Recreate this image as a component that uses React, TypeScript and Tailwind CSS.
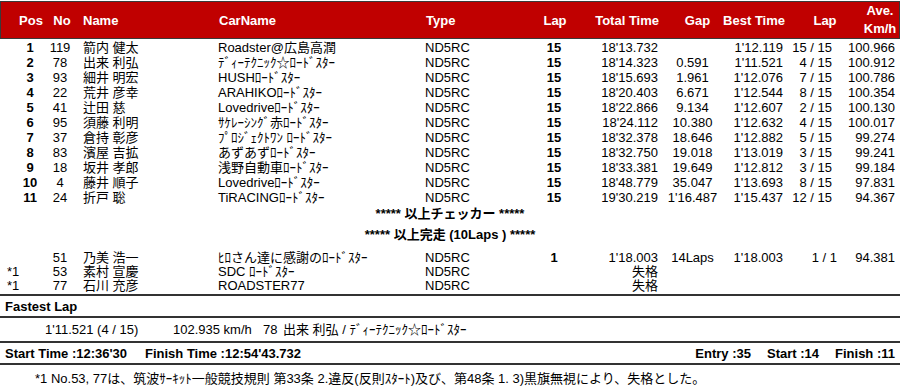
import React from "react";

const COLS =
  "grid grid-cols-[46px_28px_144px_207px_105px_48px_87px_55px_70px_50px_60px]";

type Row = {
  pos: string;
  no: string;
  name: string;
  car: string;
  lap: string;
  total: string;
  gap: string;
  best: string;
  bestLap: string;
  ave: string;
  posNote?: boolean;
  lapPr?: string;
};

const rows: Row[] = [
  { pos: "1", no: "119", name: "箭内 健太", car: "Roadster@広島高潤", lap: "15", total: "18'13.732", gap: "", best: "1'12.119", bestLap: "15 / 15", ave: "100.966" },
  { pos: "2", no: "78", name: "出来 利弘", car: "ﾃﾞｨｰﾃｸﾆｯｸ☆ﾛｰﾄﾞｽﾀｰ", lap: "15", total: "18'14.323", gap: "0.591", best: "1'11.521", bestLap: "4 / 15", ave: "100.912" },
  { pos: "3", no: "93", name: "細井 明宏", car: "HUSHﾛｰﾄﾞｽﾀｰ", lap: "15", total: "18'15.693", gap: "1.961", best: "1'12.076", bestLap: "7 / 15", ave: "100.786" },
  { pos: "4", no: "22", name: "荒井 彦幸", car: "ARAHIKOﾛｰﾄﾞｽﾀｰ", lap: "15", total: "18'20.403", gap: "6.671", best: "1'12.544", bestLap: "8 / 15", ave: "100.354" },
  { pos: "5", no: "41", name: "辻田 慈", car: "Lovedriveﾛｰﾄﾞｽﾀｰ", lap: "15", total: "18'22.866", gap: "9.134", best: "1'12.607", bestLap: "2 / 15", ave: "100.130" },
  { pos: "6", no: "95", name: "須藤 利明", car: "ｻｹﾚｰｼﾝｸﾞ赤ﾛｰﾄﾞｽﾀｰ", lap: "15", total: "18'24.112", gap: "10.380", best: "1'12.632", bestLap: "4 / 15", ave: "100.017" },
  { pos: "7", no: "37", name: "倉持 彰彦", car: "ﾌﾟﾛｼﾞｪｸﾄﾜﾝ ﾛｰﾄﾞｽﾀｰ", lap: "15", total: "18'32.378", gap: "18.646", best: "1'12.882", bestLap: "5 / 15", ave: "99.274" },
  { pos: "8", no: "83", name: "濱屋 吉拡", car: "あずあずﾛｰﾄﾞｽﾀｰ", lap: "15", total: "18'32.750", gap: "19.018", best: "1'13.019", bestLap: "3 / 15", ave: "99.241" },
  { pos: "9", no: "18", name: "坂井 孝郎", car: "浅野自動車ﾛｰﾄﾞｽﾀｰ", lap: "15", total: "18'33.381", gap: "19.649", best: "1'12.812", bestLap: "3 / 15", ave: "99.184" },
  { pos: "10", no: "4", name: "藤井 順子", car: "Lovedriveﾛｰﾄﾞｽﾀｰ", lap: "15", total: "18'48.779", gap: "35.047", best: "1'13.693", bestLap: "8 / 15", ave: "97.831" },
  { pos: "11", no: "24", name: "折戸 聡", car: "TiRACINGﾛｰﾄﾞｽﾀｰ", lap: "15", total: "19'30.219", gap: "1'16.487", best: "1'15.437", bestLap: "12 / 15", ave: "94.367" },
];

const rows2: Row[] = [
  { pos: "", no: "51", name: "乃美 浩一", car: "ﾋﾛさん達に感謝のﾛｰﾄﾞｽﾀｰ", lap: "1", total: "1'18.003", gap: "14Laps", best: "1'18.003", bestLap: "1 / 1", ave: "94.381", lapPr: "pr-[3px]" },
  { pos: "*1", no: "53", name: "素村 宣慶", car: "SDC ﾛｰﾄﾞｽﾀｰ", lap: "", total: "失格", gap: "", best: "", bestLap: "", ave: "", posNote: true },
  { pos: "*1", no: "77", name: "石川 充彦", car: "ROADSTER77", lap: "", total: "失格", gap: "", best: "", bestLap: "", ave: "", posNote: true },
];

function DataRow({ r, h }: { r: Row; h: string }) {
  return (
    <div className={`${COLS} ${h} items-center whitespace-nowrap`}>
      {r.posNote ? (
        <div className="pl-[7px] text-left">{r.pos}</div>
      ) : (
        <div className="pl-[14px] text-center font-bold">{r.pos}</div>
      )}
      <div className="text-center">{r.no}</div>
      <div className="pl-[9px]">{r.name}</div>
      <div>{r.car}</div>
      <div>ND5RC</div>
      <div className="text-center font-bold">{r.lap}</div>
      <div className="pr-[7px] text-right">{r.total}</div>
      <div className="text-center">{r.gap}</div>
      <div className="pr-[7px] text-right">{r.best}</div>
      <div className={`${r.lapPr ?? "pr-[8px]"} text-right`}>{r.bestLap}</div>
      <div className="pr-[5px] text-right">{r.ave}</div>
    </div>
  );
}

function Rule() {
  return <div className="h-[2px] bg-[#333333]" />;
}

export default function App() {
  return (
    <div
      className="relative w-[900px] h-[387px] overflow-hidden bg-white text-[13px] leading-[15px] text-black"
      style={{ fontFamily: '"Liberation Sans", Arial, "Noto Sans CJK JP", sans-serif' }}
    >
      <div className="pt-[1px]">
        <div
          className={`${COLS} h-[38px] items-center border border-[#3a3a3a] bg-[#c00000] font-bold text-white whitespace-nowrap`}
        >
          <div className="pl-[14px] text-center">Pos</div>
          <div className="text-center pl-[2px]">No</div>
          <div className="pl-[8px]">Name</div>
          <div>CarName</div>
          <div>Type</div>
          <div className="text-center">Lap</div>
          <div className="pr-[7px] text-right">Total Time</div>
          <div className="pl-[8px] text-center">Gap</div>
          <div className="pr-[6px] text-right">Best Time</div>
          <div className="pl-[18px] text-center">Lap</div>
          <div className="pl-[18px] text-center leading-[18px]">
            Ave.
            <br />
            Km/h
          </div>
        </div>
      </div>

      <div className="pt-[1px]">
        {rows.map((r, i) => (
          <DataRow key={i} r={r} h="h-[15px]" />
        ))}
      </div>

      <div className="h-[16px] flex items-center justify-center font-bold whitespace-nowrap">
        ***** 以上チェッカー *****
      </div>
      <div className="h-[6px]" />
      <div className="h-[15px] flex items-center justify-center font-bold whitespace-nowrap">
        ***** 以上完走 (10Laps ) *****
      </div>
      <div className="h-[8px]" />

      <div>
        {rows2.map((r, i) => (
          <DataRow key={i} r={r} h="h-[14px]" />
        ))}
      </div>

      <div className="h-[2px]" />
      <Rule />
      <div className="h-[20px] flex items-center pl-[5px] font-bold">Fastest Lap</div>
      <Rule />
      <div className="h-[23px] flex items-center pl-[45px] whitespace-nowrap">
        <span className="w-[128px]">1'11.521 (4 / 15)</span>
        <span className="w-[90px]">102.935 km/h</span>
        <span className="w-[20px]">78</span>
        <span>出来 利弘 / ﾃﾞｨｰﾃｸﾆｯｸ☆ﾛｰﾄﾞｽﾀｰ</span>
      </div>
      <Rule />
      <div className="h-[20px] flex items-center px-[5px] font-bold whitespace-nowrap">
        <span className="w-[140px]">Start Time :12:36'30</span>
        <span>Finish Time :12:54'43.732</span>
        <div className="ml-auto flex gap-[16px]">
          <span>Entry :35</span>
          <span>Start :14</span>
          <span>Finish :11</span>
        </div>
      </div>
      <Rule />
      <div className="h-[23px] flex items-center pl-[35px] pt-[3px] whitespace-nowrap">
        *1 No.53, 77は、筑波ｻｰｷｯﾄ一般競技規則 第33条 2.違反(反則ｽﾀｰﾄ)及び、第48条 1. 3)黒旗無視により、失格とした。
      </div>
    </div>
  );
}
